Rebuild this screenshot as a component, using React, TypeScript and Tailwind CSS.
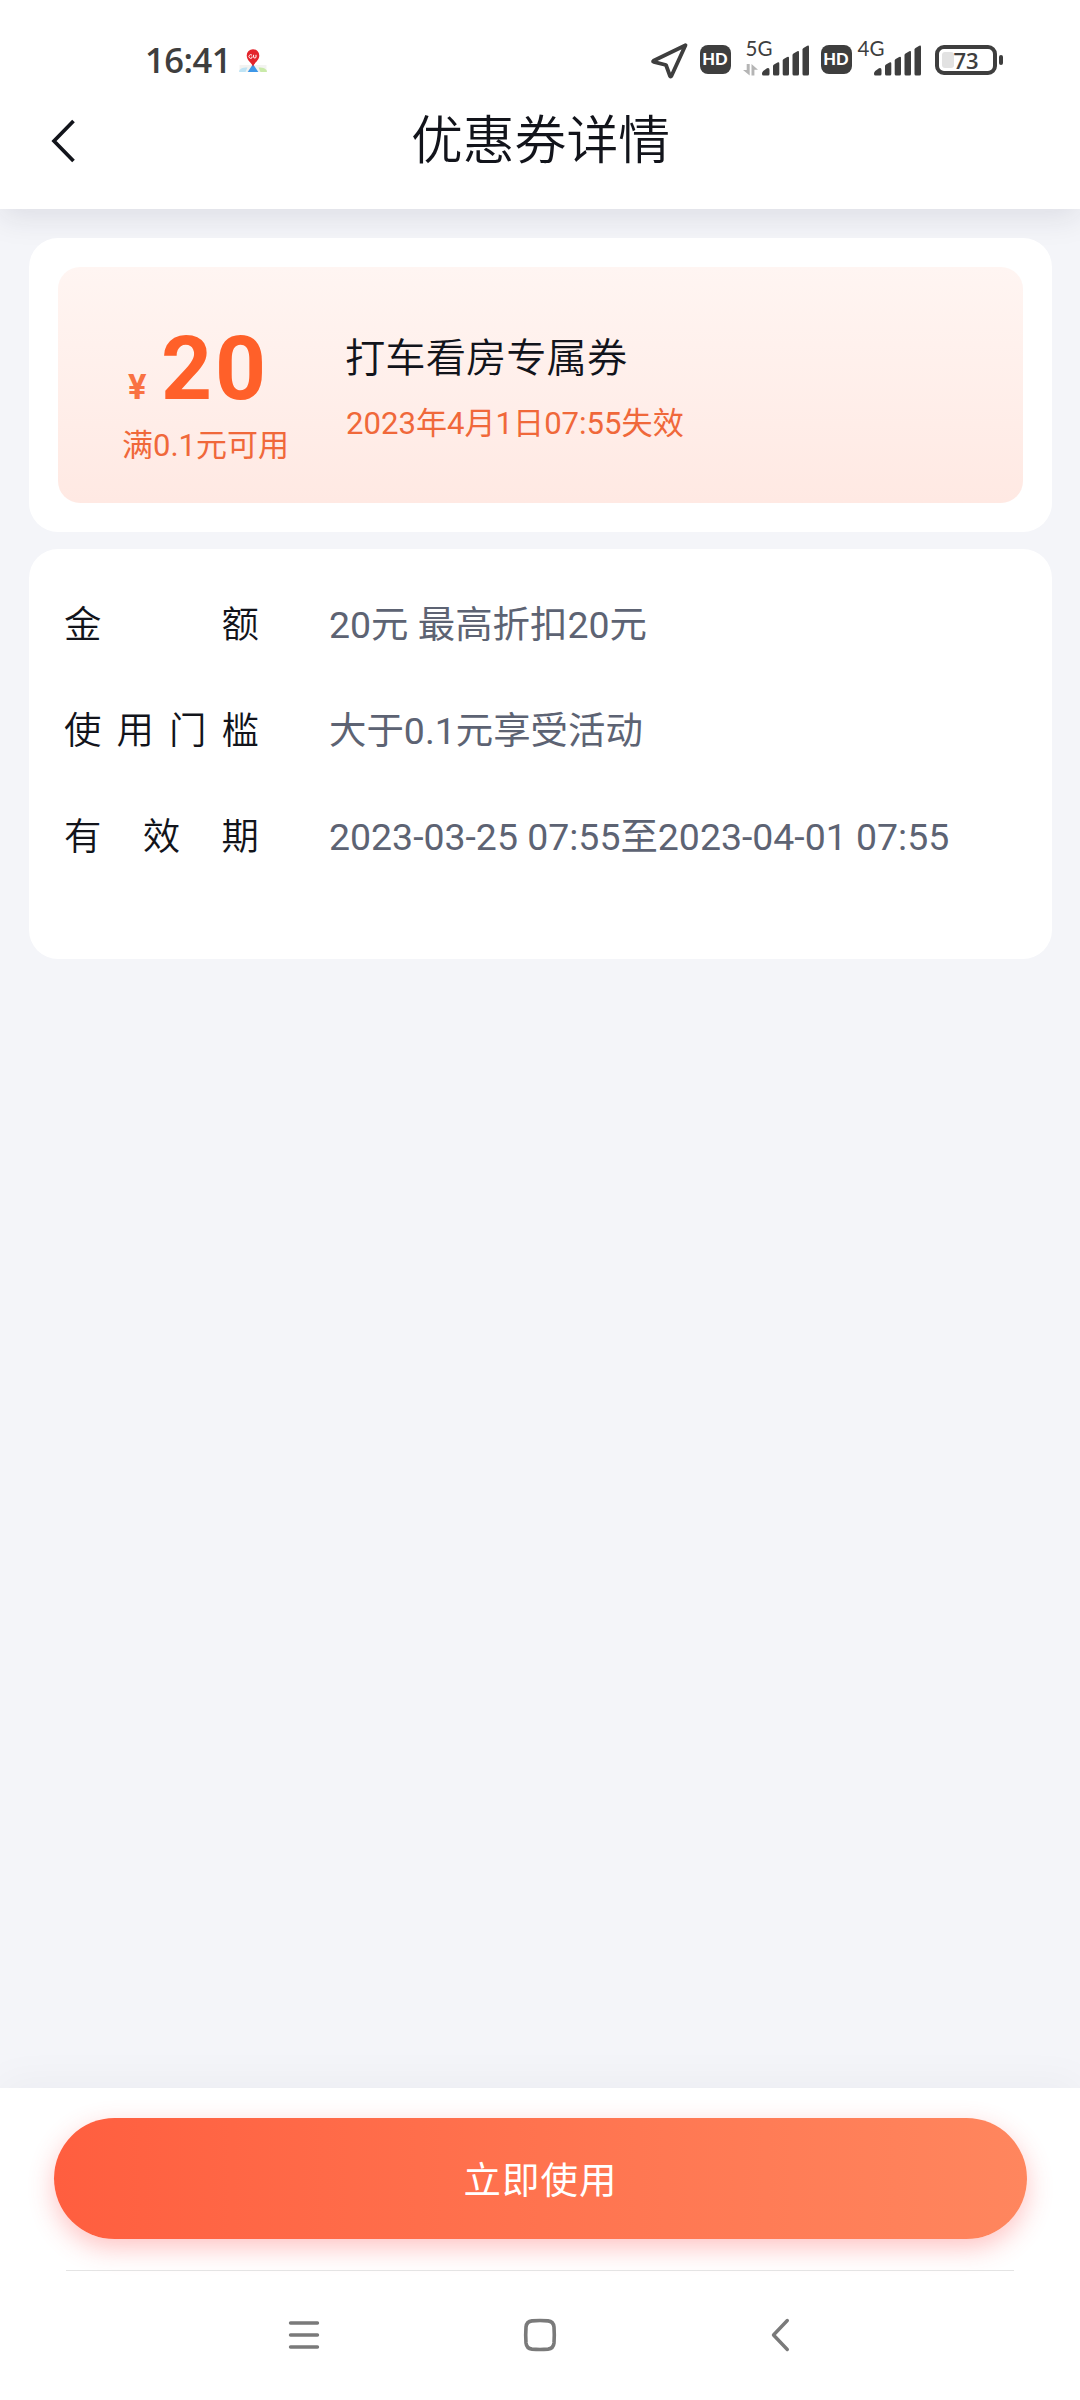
const DETAILS = [
  { label: "金额", value: "20元 最高折扣20元" },
  { label: "使用门槛", value: "大于0.1元享受活动" },
  { label: "有效期", value: "2023-03-25 07:55至2023-04-01 07:55" },
];

function MapPinIcon() {
  return (
    <svg width="28" height="28" viewBox="0 0 28 28" className="ml-[12px] shrink-0">
      <path d="M0.5 20h27v7h-27z" fill="#f3f3f1" />
      <path d="M0 26.5c.5-2.500 3-4 8.500-4L6.500 27H.500z" fill="#bfe4f5" />
      <path d="M28 26.500c-.5-2.500-3-4-8.500-4L21.500 27h6z" fill="#c9eaa9" />
      <path d="M14 19l5.300 8H8.700z" fill="#3d97e8" />
      <path d="M14 22c-.6-4-6.300-6.200-6.300-11.500a6.300 6.300 0 0 1 12.600 0C20.300 15.800 14.600 18 14 22z" fill="#e3242b" />
      <path d="M13 10.200a1.800 1.800 0 1 0 0 2.600v-1.300M14.600 9.800v2.200q0 1 1.200 1t1.200-1V9.800" fill="none" stroke="#fff" strokeWidth="1" />
    </svg>
  );
}

function HdBadge() {
  return (
    <span className="flex h-[29px] w-[31px] shrink-0 items-center justify-center rounded-[8px] bg-[#3e3e3e] font-['Lato'] text-[16.500px] leading-none font-black text-white">
      HD
    </span>
  );
}

function SignalBars() {
  return (
    <svg width="48" height="31" viewBox="0 0 48 31" className="shrink-0" fill="#3e3e3e">
      <path d="M0 28.500Q0 27 1.200 26L5 23.300Q7.500 22.500 7.500 25V29q0 1.500-1.500 1.500H1.500Q0 30.500 0 29z" />
      <path d="M11 21q0-1 1-1.500l3.500-2q1.800-.8 1.800 1V29q0 1.500-1.500 1.500h-3.300Q11 30.500 11 29z" />
      <path d="M20.700 15.500q0-1 1-1.600l3.500-2q1.800-.8 1.800 1V29q0 1.500-1.500 1.500h-3.300q-1.500 0-1.500-1.500z" />
      <path d="M30.500 10q0-1 1-1.600l3.800-2.200q1.700-.7 1.700 1V29q0 1.500-1.500 1.500H32q-1.500 0-1.500-1.500z" />
      <path d="M40.500 4.500q0-1 1-1.600l3.800-2.200q1.700-.7 1.700 1V29q0 1.500-1.500 1.500H42q-1.500 0-1.500-1.500z" />
    </svg>
  );
}

function StatusBar() {
  return (
    <div className="flex h-[80px] items-start pt-[45px] text-[#3e3e3e]">
      <span className="-mt-[1px] ml-[145px] w-[82px] font-['Open_Sans'] text-[34.500px] leading-[31px] font-[550] tracking-[-0.500px] whitespace-nowrap">
        16:41
      </span>
      <MapPinIcon />
      <svg width="40" height="40" viewBox="0 0 40 40" className="-mt-[5px] ml-[383px] shrink-0">
        <path d="M35.500 5.200L3.500 20.700q-1 .7.2 1.100L16 25l4 11q.8 1 1.400 0z" fill="none" stroke="#3e3e3e" strokeWidth="3.800" strokeLinejoin="round" />
      </svg>
      <div className="ml-[9.500px]">
        <HdBadge />
      </div>
      <div className="relative ml-[12px] flex w-[67px] justify-end">
        <span className="absolute -top-[7px] left-[3px] font-['Lato'] text-[20.500px] leading-[20px]">5G</span>
        <svg width="15" height="12" viewBox="0 0 15 12" className="mt-[18.500px] mr-[4px] shrink-0" fill="#b5b5b5">
          <path d="M3.700 0h3v11.500L0 6h3.700zM8.500 0L15 5.800h-3.600v5.700H8.500z" />
        </svg>
        <SignalBars />
      </div>
      <div className="ml-[11px]">
        <HdBadge />
      </div>
      <div className="relative ml-[6px] flex w-[64px] justify-end">
        <span className="absolute -top-[7px] left-0 font-['Lato'] text-[20.500px] leading-[20px]">4G</span>
        <SignalBars />
      </div>
      <div className="ml-[13.500px] flex items-center">
        <div className="relative flex h-[30px] w-[62px] items-center justify-center rounded-[9px] border-[4px] border-[#3e3e3e]">
          <span className="absolute top-[3px] left-[3px] h-[16px] w-[12px] rounded-[3px] bg-[#e2e2e2]" />
          <span className="relative font-['Open_Sans'] text-[22px] leading-none font-[550]">73</span>
        </div>
        <span className="ml-[2px] h-[10px] w-[4px] rounded-[2px] bg-[#3e3e3e]" />
      </div>
    </div>
  );
}

function Header() {
  return (
    <header className="relative h-[209px] bg-white shadow-[0_9px_29px_rgba(30,34,60,0.1)]">
      <StatusBar />
      <div className="flex h-[121px] items-start">
        <svg width="30" height="46" viewBox="0 0 30 46" className="mt-[38px] ml-[48px] shrink-0">
          <path d="M25.500 3L6 23l19.500 20" fill="none" stroke="#12141b" strokeWidth="3.700" />
        </svg>
        <h1 className="mt-[30px] mr-[77px] flex-1 text-center text-[51.840px] leading-[64px] font-[350] text-[#12141b]">
          优惠券详情
        </h1>
      </div>
    </header>
  );
}

function CouponCard() {
  return (
    <section className="rounded-[29px] bg-white p-[29px]">
      <div className="flex h-[236px] rounded-[22px] bg-linear-to-b from-[#fff5f2] to-[#ffe9e3] text-[#f0683a]">
        <div className="ml-[64px] w-[223px]">
          <div className="mt-[58px] flex h-[88px] items-baseline font-bold text-[#ff6029]">
            <span className="ml-[6px] w-[33px] text-[34.500px] leading-[88px] text-[#f97243]">¥</span>
            <span className="text-[89px] leading-[88px] tracking-[3px]">20</span>
          </div>
          <p className="mt-[9px] text-[31px] leading-[48px]">满0.1元可用</p>
        </div>
        <div>
          <h2 className="mt-[62px] text-[40.320px] leading-[60px] font-[350] text-[#12141b]">打车看房专属券</h2>
          <p className="mt-[11px] ml-[1px] text-[31.100px] leading-[48px]">2023年4月1日07:55失效</p>
        </div>
      </div>
    </section>
  );
}

function DetailCard() {
  return (
    <section className="mt-[17px] flex h-[410px] flex-col gap-[46px] rounded-[29px] bg-white pt-[46px] pl-[35px] text-[37.440px] leading-[60px]">
      {DETAILS.map((row) => (
        <div key={row.label} className="flex">
          <div className="flex w-[195px] justify-between font-[350] text-[#12141b]">
            {row.label.split("").map((char) => (
              <span key={char}>{char}</span>
            ))}
          </div>
          <span className="ml-[70px] whitespace-nowrap text-[#5d6373]">{row.value}</span>
        </div>
      ))}
    </section>
  );
}

function NavBar() {
  return (
    <nav className="flex h-[129px] items-center pb-[1px]">
      <svg width="32" height="32" viewBox="0 0 32 32" className="ml-[288px]">
        <path d="M2.500 4h27M2.500 16h27M2.500 28h27" stroke="#7a7a7a" strokeWidth="3.400" strokeLinecap="round" />
      </svg>
      <svg width="34" height="34" viewBox="0 0 34 34" className="ml-[203px]">
        <path d="M9 2.900Q17 2.200 25 2.900Q30.400 3.500 31 9Q31.600 17 31 25Q30.400 30.500 25 31.100Q17 31.800 9 31.100Q3.600 30.500 3 25Q2.400 17 3 9Q3.600 3.500 9 2.900z" fill="none" stroke="#7a7a7a" strokeWidth="3.600" />
      </svg>
      <svg width="20" height="34" viewBox="0 0 20 34" className="ml-[212.500px]">
        <path d="M17.300 2.500L3.500 17l13.800 14.500" fill="none" stroke="#7a7a7a" strokeWidth="3.400" strokeLinecap="round" strokeLinejoin="round" />
      </svg>
    </nav>
  );
}

export default function App() {
  return (
    <div className="flex h-[2400px] w-[1080px] flex-col overflow-hidden bg-[#f4f5f9] font-['Roboto','Noto_Sans_CJK_SC',sans-serif]">
      <Header />

      <main className="relative flex-1 px-[29px] pr-[28px] pt-[29px]">
        <CouponCard />
        <DetailCard />
      </main>

      {/* Bottom action */}
      <footer className="relative h-[312px] bg-white pt-[30px] shadow-[0_-6px_40px_rgba(30,34,60,0.040)]">
        <button className="mx-[54px] flex h-[121px] w-[973px] items-center justify-center rounded-full bg-linear-to-r from-[#ff5e3f] to-[#ff865e] pt-[5px] text-[37.440px] tracking-[1.100px] text-white shadow-[0_9px_26px_rgba(255,70,70,0.320)]">
          立即使用
        </button>
        <div className="mx-[66px] mt-[31px] h-px bg-[#e4e4e4]" />
        <NavBar />
      </footer>
    </div>
  );
}
